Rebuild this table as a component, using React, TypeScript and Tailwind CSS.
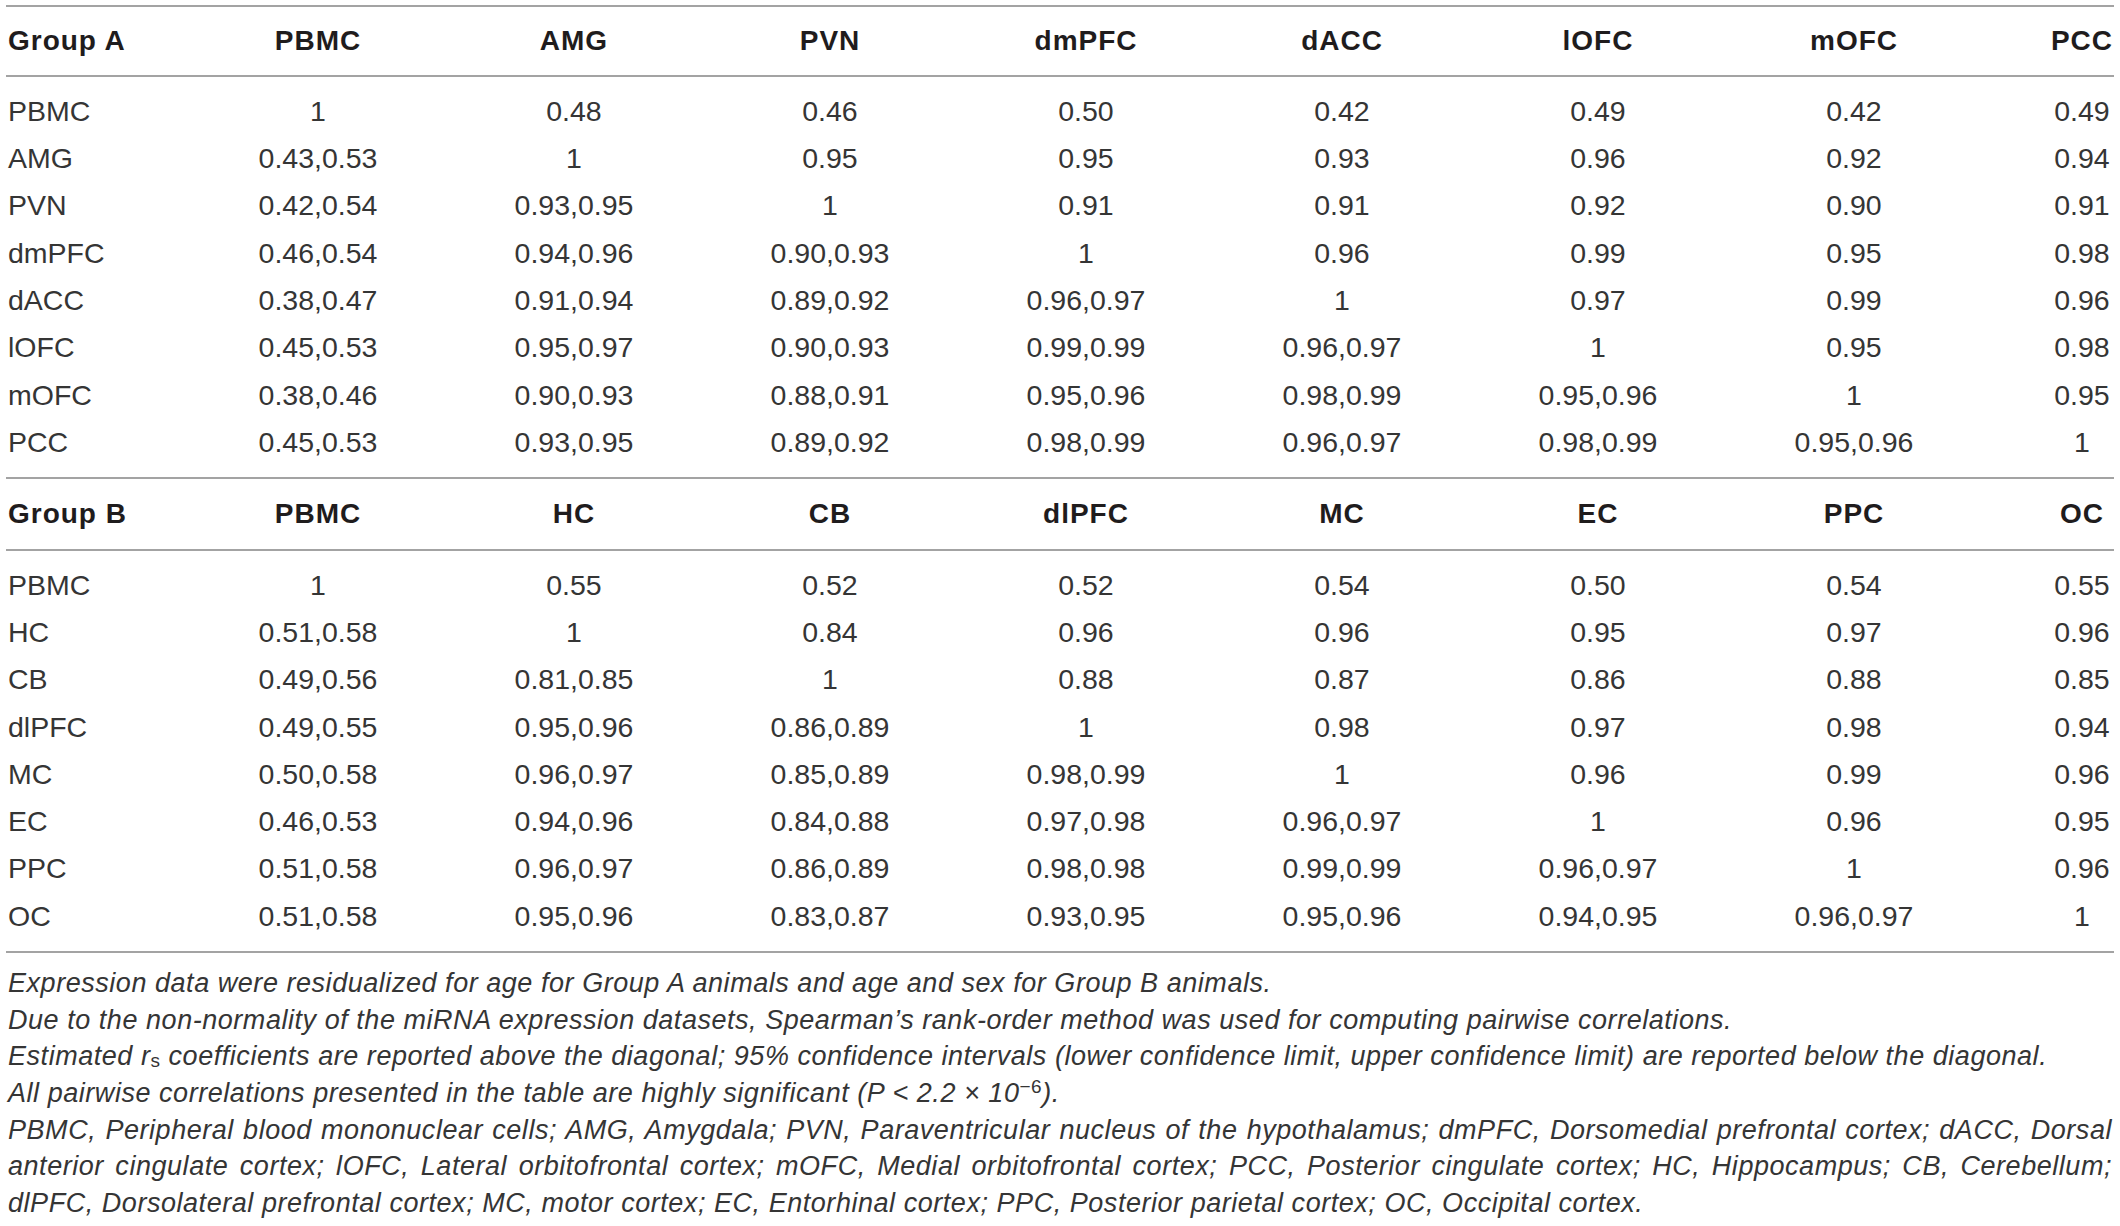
import React from "react";

type Section = { head: string[]; rows: string[][] };

const groupA: Section = {
  head: ["Group A", "PBMC", "AMG", "PVN", "dmPFC", "dACC", "lOFC", "mOFC", "PCC"],
  rows: [
    ["PBMC", "1", "0.48", "0.46", "0.50", "0.42", "0.49", "0.42", "0.49"],
    ["AMG", "0.43,0.53", "1", "0.95", "0.95", "0.93", "0.96", "0.92", "0.94"],
    ["PVN", "0.42,0.54", "0.93,0.95", "1", "0.91", "0.91", "0.92", "0.90", "0.91"],
    ["dmPFC", "0.46,0.54", "0.94,0.96", "0.90,0.93", "1", "0.96", "0.99", "0.95", "0.98"],
    ["dACC", "0.38,0.47", "0.91,0.94", "0.89,0.92", "0.96,0.97", "1", "0.97", "0.99", "0.96"],
    ["lOFC", "0.45,0.53", "0.95,0.97", "0.90,0.93", "0.99,0.99", "0.96,0.97", "1", "0.95", "0.98"],
    ["mOFC", "0.38,0.46", "0.90,0.93", "0.88,0.91", "0.95,0.96", "0.98,0.99", "0.95,0.96", "1", "0.95"],
    ["PCC", "0.45,0.53", "0.93,0.95", "0.89,0.92", "0.98,0.99", "0.96,0.97", "0.98,0.99", "0.95,0.96", "1"],
  ],
};

const groupB: Section = {
  head: ["Group B", "PBMC", "HC", "CB", "dlPFC", "MC", "EC", "PPC", "OC"],
  rows: [
    ["PBMC", "1", "0.55", "0.52", "0.52", "0.54", "0.50", "0.54", "0.55"],
    ["HC", "0.51,0.58", "1", "0.84", "0.96", "0.96", "0.95", "0.97", "0.96"],
    ["CB", "0.49,0.56", "0.81,0.85", "1", "0.88", "0.87", "0.86", "0.88", "0.85"],
    ["dlPFC", "0.49,0.55", "0.95,0.96", "0.86,0.89", "1", "0.98", "0.97", "0.98", "0.94"],
    ["MC", "0.50,0.58", "0.96,0.97", "0.85,0.89", "0.98,0.99", "1", "0.96", "0.99", "0.96"],
    ["EC", "0.46,0.53", "0.94,0.96", "0.84,0.88", "0.97,0.98", "0.96,0.97", "1", "0.96", "0.95"],
    ["PPC", "0.51,0.58", "0.96,0.97", "0.86,0.89", "0.98,0.98", "0.99,0.99", "0.96,0.97", "1", "0.96"],
    ["OC", "0.51,0.58", "0.95,0.96", "0.83,0.87", "0.93,0.95", "0.95,0.96", "0.94,0.95", "0.96,0.97", "1"],
  ],
};

function cellClass(i: number) {
  if (i === 0) return "pl-[2px] text-left";
  if (i === 8) return "pl-[68px] text-center";
  return "text-center";
}

function TableSection({ s, first }: { s: Section; first: boolean }) {
  return (
    <div>
      <div
        className={
          "grid grid-cols-[184px_repeat(7,256px)_1fr] items-center h-[72px] border-b-2 border-[#a3a3a3] font-bold text-[#1f1c1d] tracking-[0.035em] " +
          (first ? "border-t-2" : "")
        }
      >
        {s.head.map((h, i) => (
          <div key={i} className={cellClass(i) + " whitespace-nowrap"}>
            {h}
          </div>
        ))}
      </div>
      <div className="pt-[10.35px] pb-[11.25px] border-b-2 border-[#a3a3a3]">
        {s.rows.map((r, ri) => (
          <div
            key={ri}
            className="grid grid-cols-[184px_repeat(7,256px)_1fr] items-center h-[47.3px] text-[#353535] text-[28.5px]"
          >
            {r.map((c, i) => (
              <div key={i} className={cellClass(i) + " whitespace-nowrap"}>
                {c}
              </div>
            ))}
          </div>
        ))}
      </div>
    </div>
  );
}

export default function App() {
  return (
    <div
      className="w-[2120px] h-[1226px] bg-white overflow-hidden pt-[5px] px-[6px]"
      style={{ fontFamily: '"Liberation Sans", Arial, sans-serif' }}
    >
      <div className="text-[28px] leading-none">
        <TableSection s={groupA} first={true} />
        <TableSection s={groupB} first={false} />
      </div>
      <div className="mt-[12px] pl-[2px] italic text-[27px] tracking-[0.02em] leading-[36.7px] text-[#353535] w-[2106px]">
        <div className="whitespace-nowrap">
          Expression data were residualized for age for Group A animals and age and sex for Group B animals.
        </div>
        <div className="whitespace-nowrap">
          Due to the non-normality of the miRNA expression datasets, Spearman’s rank-order method was used for computing pairwise correlations.
        </div>
        <div className="whitespace-nowrap">
          Estimated r<sub className="text-[19px] not-italic relative top-[2px]">s</sub> coefficients are reported above the diagonal; 95% confidence intervals (lower confidence limit, upper confidence limit) are reported below the diagonal.
        </div>
        <div className="whitespace-nowrap">
          All pairwise correlations presented in the table are highly significant (P &lt; 2.2 × 10
          <sup className="text-[19px] not-italic">−6</sup>).
        </div>
        <div className="text-justify [text-align-last:justify] whitespace-nowrap">
          PBMC, Peripheral blood mononuclear cells; AMG, Amygdala; PVN, Paraventricular nucleus of the hypothalamus; dmPFC, Dorsomedial prefrontal cortex; dACC, Dorsal
        </div>
        <div className="text-justify [text-align-last:justify]">
          anterior cingulate cortex; lOFC, Lateral orbitofrontal cortex; mOFC, Medial orbitofrontal cortex; PCC, Posterior cingulate cortex; HC, Hippocampus; CB, Cerebellum;
        </div>
        <div className="whitespace-nowrap">
          dlPFC, Dorsolateral prefrontal cortex; MC, motor cortex; EC, Entorhinal cortex; PPC, Posterior parietal cortex; OC, Occipital cortex.
        </div>
      </div>
    </div>
  );
}
